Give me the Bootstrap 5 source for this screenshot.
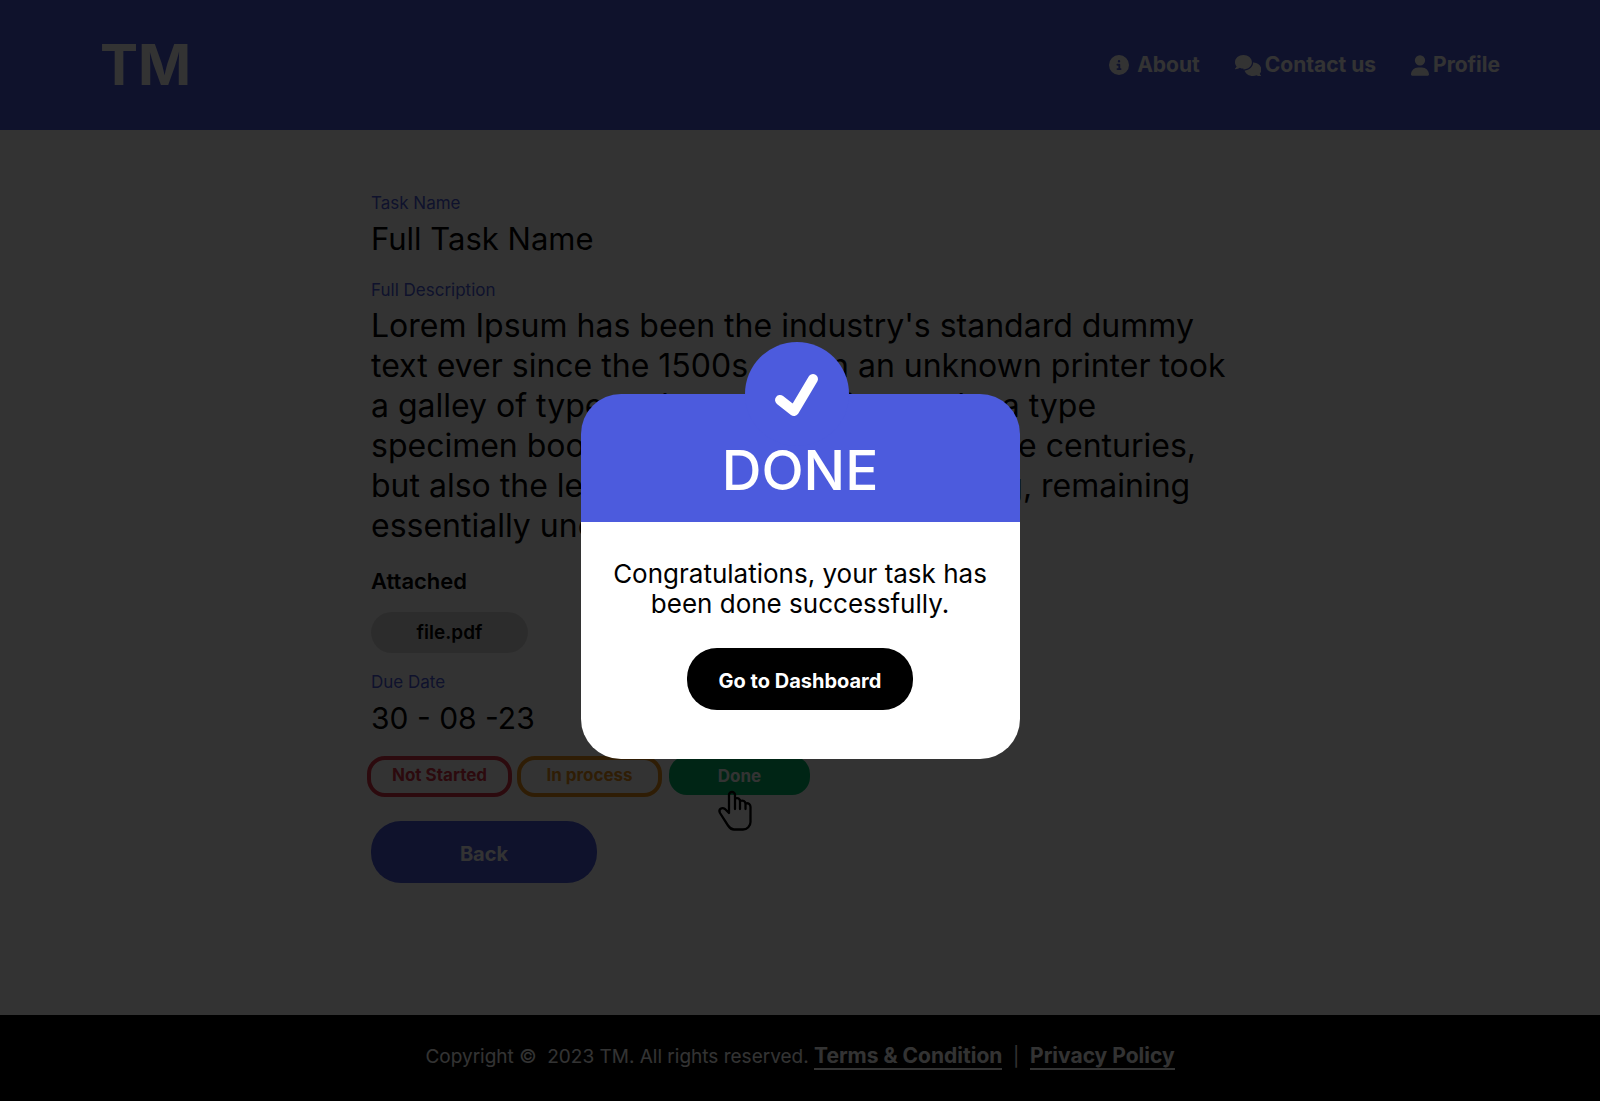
<!DOCTYPE html>
<html lang="en">
<head>
<meta charset="utf-8">
<meta name="viewport" content="width=device-width, initial-scale=1">
<title>TM – Task details</title>
<link href="https://cdn.jsdelivr.net/npm/bootstrap@5.3.0/dist/css/bootstrap.min.css" rel="stylesheet">
<style>
  :root { --tm-blue: #4c5bdd; }
  body { font-family: Inter, "Open Sans", sans-serif; color: #000; background: #fff; }
  .tm-header { background: var(--tm-blue); height: 130px; padding: 0 100px; }
  .tm-brand, .tm-brand:hover { color: #fff; font-size: 57px; line-height: 60px; font-weight: 700; }
  .tm-nav { gap: 35px; }
  .tm-nav .nav-link { color: #fff; font-size: 21px; line-height: 30px; font-weight: 700; }
  .tm-main { padding-top: 60px; }
  .tm-column { max-width: 858px; }
  .tm-label { color: var(--tm-blue); font-size: 17px; line-height: 26px; margin-bottom: 3px; }
  .tm-value { font-size: 31px; line-height: 40px; margin-bottom: 18px; }
  .tm-text { font-size: 32px; margin-bottom: 20px; }
  .tm-date { font-size: 30px; }
  .tm-heading { font-size: 22px; line-height: 30px; font-weight: 600; }
  .tm-file { background: #ddd; width: 157px; height: 41px; font-size: 19px; line-height: 24px; font-weight: 600; color: #000; }
  .tm-states { margin-left: -4px; gap: 5px; }
  .tm-state { width: 145px; height: 41px; border: 4px solid; border-radius: 18px; font-size: 17px; line-height: 24px; font-weight: 700; padding: 0 0 3px; background: none; }
  .tm-state-red { color: #dc3545; border-color: #dc3545; }
  .tm-state-orange { color: #ec921a; border-color: #ec921a; }
  .tm-state-green, .tm-state-green:hover { width: 141px; height: 39px; color: #fff; background: #00b868; border: 0; padding: 0; }
  .tm-done { margin-left: 2px; }
  .tm-hand { left: 47px; top: 33px; }
  .tm-action { width: 226px; height: 62px; border-radius: 30px; font-size: 20px; line-height: 28px; font-weight: 700; color: #fff; padding: 3px 0 0; }
  .tm-action-blue, .tm-action-blue:hover { background: var(--tm-blue); color: #fff; }
  .tm-action-black, .tm-action-black:hover { background: #000; color: #fff; }
  .tm-footer { background: #000; color: #fff; height: 86px; font-size: 19px; line-height: 30px; padding-bottom: 3px; }
  .tm-footer a { color: #fff; font-size: 21px; font-weight: 700; text-decoration: none; border-bottom: 2px solid #fff; }
  .modal-backdrop { --bs-backdrop-opacity: .8; }
  .tm-dialog { --bs-modal-width: 439px; padding-top: 52px; }
  .tm-dialog .modal-content { border: 0; background: none; }
  .tm-dialog .modal-header { background: var(--tm-blue); color: #fff; border: 0; border-radius: 40px 40px 0 0; height: 128px; padding: 24px 0 0; }
  .tm-tick { width: 104px; height: 104px; top: -52px; left: 164px; background: var(--tm-blue); }
  .tm-title { font-size: 55px; line-height: 64px; font-weight: 500; }
  .tm-dialog .modal-body { background: #fff; border-radius: 0 0 40px 40px; padding: 37px 30px 49px; gap: 29px; }
  .tm-message { font-size: 26px; line-height: 30px; }
</style>
</head>
<body class="d-flex flex-column min-vh-100">

<header class="tm-header navbar navbar-expand justify-content-between">
  <a class="tm-brand navbar-brand p-0 m-0" href="#">TM</a>
  <nav class="tm-nav navbar-nav" aria-label="Main">
    <a class="nav-link p-0 d-flex align-items-center gap-2" href="#">
      <svg width="20" height="20" viewBox="0 0 512 512" fill="currentColor" aria-hidden="true"><path d="M256 0a256 256 0 1 0 0 512a256 256 0 1 0 0-512zM216 336h24v-64h-24c-13 0-24-11-24-24s11-24 24-24h48c13 0 24 11 24 24v88h8c13 0 24 11 24 24s-11 24-24 24h-80c-13 0-24-11-24-24s11-24 24-24zm40-208a32 32 0 1 1 0 64a32 32 0 1 1 0-64z"/></svg>
      About
    </a>
    <a class="nav-link p-0 d-flex align-items-center gap-1" href="#">
      <svg width="26" height="21" viewBox="0 0 640 512" fill="currentColor" aria-hidden="true"><path d="M208 352c115 0 208-79 208-176S323 0 208 0S0 79 0 176c0 39 15 74 40 104c-4 10-10 19-16 27c-6 7-11 13-15 17c-2 2-4 3-5 4l-1 1c-3 3-4 7-3 11s5 6 10 6c22 0 43-6 62-13c18-7 34-15 46-23c27 13 58 22 90 22zM448 176c0 113-99 194-212 207c24 75 107 129 204 129c34 0 66-7 93-19c12 8 28 16 46 23c19 7 40 12 62 12c4 0 9-3 10-7s0-9-4-12l-1-1c-4-4-13-12-21-21c-6-8-12-17-16-27c25-29 40-65 40-104c0-93-85-170-193-176c-2-2 0-2 0-4z"/></svg>
      Contact us
    </a>
    <a class="nav-link p-0 d-flex align-items-center gap-1" href="#">
      <svg width="18" height="21" viewBox="0 0 448 512" fill="currentColor" aria-hidden="true"><path d="M224 256a128 128 0 1 0 0-256a128 128 0 1 0 0 256zm-46 48C80 304 0 384 0 482c0 16 14 30 30 30h388c16 0 30-14 30-30c0-98-80-178-178-178z"/></svg>
      Profile
    </a>
  </nav>
</header>

<main class="tm-main flex-grow-1 px-3">
  <div class="tm-column mx-auto">
    <div class="tm-label">Task Name</div>
    <div class="tm-value">Full Task Name</div>
    <div class="tm-label">Full Description</div>
    <p class="tm-value tm-text">Lorem Ipsum has been the industry's standard dummy<br>text ever since the 1500s, when an unknown printer took<br>a galley of type and scrambled it to make a type<br>specimen book. It has survived not only five centuries,<br>but also the leap into electronic typesetting, remaining<br>essentially unchanged.</p>
    <h2 class="tm-heading mb-3">Attached</h2>
    <button type="button" class="tm-file btn rounded-pill border-0 p-0 d-block mb-3">file.pdf</button>
    <div class="tm-label">Due Date</div>
    <div class="tm-value tm-date">30 - 08 -23</div>
    <div class="tm-states d-flex mb-4">
      <button type="button" class="tm-state tm-state-red">Not Started</button>
      <button type="button" class="tm-state tm-state-orange">In process</button>
      <div class="tm-done position-relative">
        <button type="button" class="tm-state tm-state-green d-block">Done</button>
        <svg class="tm-hand position-absolute" width="38" height="43" viewBox="0 0 38 43" fill="none" stroke="#000" stroke-width="2.3" stroke-linejoin="round" stroke-linecap="round" aria-hidden="true"><path d="M13 24V6a3 3 0 0 1 6 0v14M19 9.500c3-1 5 0 5 3V20M24 12c3-1 5.500 0 5.500 3v5M29.500 14.500c3-1 5 1 5 3.500V33a7.500 7.500 0 0 1-7.500 7.500h-9c-3 0-4-1-6-4L4 24c-2-4 2-6 5-4l4 4"/></svg>
      </div>
    </div>
    <button type="button" class="tm-action tm-action-blue btn border-0">Back</button>
  </div>
</main>

<footer class="tm-footer d-flex justify-content-center align-items-center">
  <div>Copyright ©&nbsp; 2023 TM. All rights reserved. <a href="#">Terms &amp; Condition</a>&nbsp; |&nbsp; <a href="#">Privacy Policy</a></div>
</footer>

<div class="modal-backdrop show"></div>
<div class="modal show d-block" tabindex="-1" role="dialog" aria-modal="true" aria-labelledby="doneTitle">
  <div class="tm-dialog modal-dialog modal-dialog-centered">
    <div class="modal-content">
      <div class="tm-tick position-absolute rounded-circle z-1">
        <svg width="104" height="104" viewBox="0 0 104 104" fill="none" stroke="#fff" stroke-width="10" stroke-linecap="round" stroke-linejoin="round" aria-hidden="true"><path d="M35 58L49 69L68 37"/></svg>
      </div>
      <div class="modal-header justify-content-center">
        <h1 class="tm-title m-0 position-relative z-2" id="doneTitle">DONE</h1>
      </div>
      <div class="modal-body d-flex flex-column align-items-center">
        <p class="tm-message text-center m-0">Congratulations, your task has been done successfully.</p>
        <button type="button" class="tm-action tm-action-black btn border-0">Go to Dashboard</button>
      </div>
    </div>
  </div>
</div>

<script src="https://cdn.jsdelivr.net/npm/bootstrap@5.3.0/dist/js/bootstrap.bundle.min.js"></script>
</body>
</html>
